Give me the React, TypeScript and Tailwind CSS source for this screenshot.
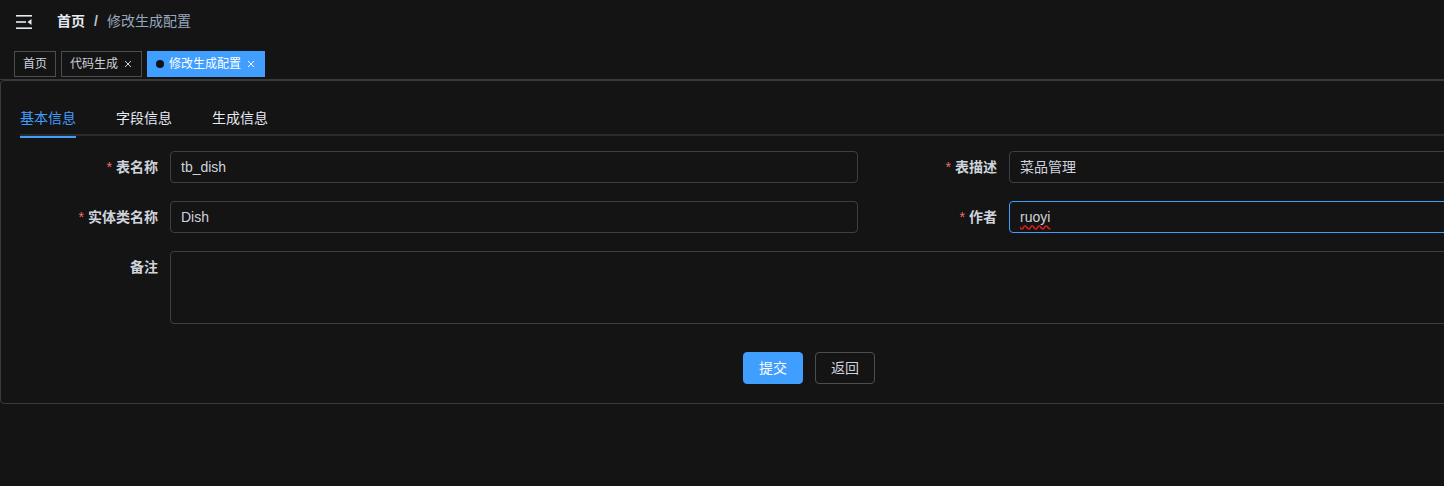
import React from "react";

const font = {
  fontFamily: '"Liberation Sans", "Noto Sans CJK SC", sans-serif',
};

function Hamburger() {
  return (
    <svg width="17" height="14" viewBox="0 0 17 14" fill="none">
      <rect x="0" y="0" width="16" height="1.6" fill="#e5eaf3" />
      <rect x="0" y="6.2" width="10" height="1.6" fill="#e5eaf3" />
      <path d="M11.5 7 L15.5 4 L15.5 10 Z" fill="#e5eaf3" />
      <rect x="0" y="12.4" width="16" height="1.6" fill="#e5eaf3" />
    </svg>
  );
}

function Close({ color }: { color: string }) {
  return (
    <svg width="8" height="8" viewBox="0 0 8 8" className="ml-[6px] mr-[1px]">
      <path d="M1 1 L7 7 M7 1 L1 7" stroke={color} strokeWidth="1" />
    </svg>
  );
}

function Label({ text, required }: { text: string; required?: boolean }) {
  return (
    <div className="w-[150px] shrink-0 pr-[12px] flex justify-end h-[32px] items-center text-[14px] font-bold text-[#cfd3dc]">
      {required && <span className="text-[#f56c6c] mr-[4px] font-normal">*</span>}
      {text}
    </div>
  );
}

function Field({ value, focused, wavy }: { value: string; focused?: boolean; wavy?: boolean }) {
  return (
    <div
      className={`h-[32px] flex items-center px-[10px] rounded-[4px] border text-[14px] text-[#cfd3dc] ${
        focused ? "border-[#409eff]" : "border-[#3e3f41]"
      }`}
    >
      {wavy ? (
        <span className="underline decoration-wavy decoration-[#e0201b] underline-offset-[3px]">{value}</span>
      ) : (
        value
      )}
    </div>
  );
}

export default function App() {
  return (
    <div className="w-[1444px] h-[486px] overflow-hidden bg-[#141414]" style={font}>
      <div className="w-[1720px]">
        {/* navbar */}
        <div className="h-[42px] flex items-center pl-[16px] pt-[1px]">
          <Hamburger />
          <div className="ml-[24px] flex items-center text-[14px]">
            <span className="text-[#e5eaf3] font-bold">首页</span>
            <span className="mx-[9px] text-[#c0c4cc] font-bold">/</span>
            <span className="text-[#97a8be]">修改生成配置</span>
          </div>
        </div>

        {/* tags */}
        <div className="h-[38px] pt-[9px] pl-[14px] flex items-start gap-[5px] border-b border-[#3a3a3c] text-[12px]">
          <div className="h-[26px] px-[8px] flex items-center border border-[#4c4d4f] text-[#cfd3dc]">首页</div>
          <div className="h-[26px] px-[8px] flex items-center border border-[#4c4d4f] text-[#cfd3dc]">
            代码生成
            <Close color="#cfd3dc" />
          </div>
          <div className="h-[26px] px-[8px] flex items-center border border-[#409eff] bg-[#409eff] text-white">
            <span className="w-[8px] h-[8px] rounded-full bg-[#141414] mr-[5px]"></span>
            修改生成配置
            <Close color="#ffffff" />
          </div>
        </div>

        {/* card */}
        <div className="border border-[#3a3a3c] rounded-[4px] pt-[17px] pl-[19px]">
          <div className="flex h-[38px] border-b-2 border-[#2b2b2e] text-[14px]">
            <div className="relative h-[38px] pt-[2px] flex items-center text-[#409eff] pr-[20px]">
              基本信息
              <span className="absolute left-0 right-[20px] bottom-[-2px] h-[2px] bg-[#409eff]"></span>
            </div>
            <div className="h-[38px] pt-[2px] flex items-center px-[20px] text-[#e5eaf3]">字段信息</div>
            <div className="h-[38px] pt-[2px] flex items-center px-[20px] text-[#e5eaf3]">生成信息</div>
          </div>

          <div className="mt-[15px]">
            <div className="flex mb-[18px]">
              <div className="w-[839px] flex">
                <Label text="表名称" required />
                <div className="w-[688px]">
                  <Field value="tb_dish" />
                </div>
              </div>
              <div className="flex-1 flex">
                <Label text="表描述" required />
                <div className="flex-1">
                  <Field value="菜品管理" />
                </div>
              </div>
            </div>

            <div className="flex mb-[18px]">
              <div className="w-[839px] flex">
                <Label text="实体类名称" required />
                <div className="w-[688px]">
                  <Field value="Dish" />
                </div>
              </div>
              <div className="flex-1 flex">
                <Label text="作者" required />
                <div className="flex-1">
                  <Field value="ruoyi" focused wavy />
                </div>
              </div>
            </div>

            <div className="flex mb-[18px]">
              <Label text="备注" />
              <div className="flex-1 h-[73px] rounded-[4px] border border-[#3e3f41]"></div>
            </div>

            <div className="flex gap-[12px] pl-[723px] pt-[10px] mb-[19px] text-[14px]">
              <button className="w-[60px] h-[32px] rounded-[4px] bg-[#409eff] border border-[#409eff] text-white">
                提交
              </button>
              <button className="w-[60px] h-[32px] rounded-[4px] border border-[#4c4d4f] text-[#cfd3dc]">
                返回
              </button>
            </div>
          </div>
        </div>
      </div>
    </div>
  );
}
